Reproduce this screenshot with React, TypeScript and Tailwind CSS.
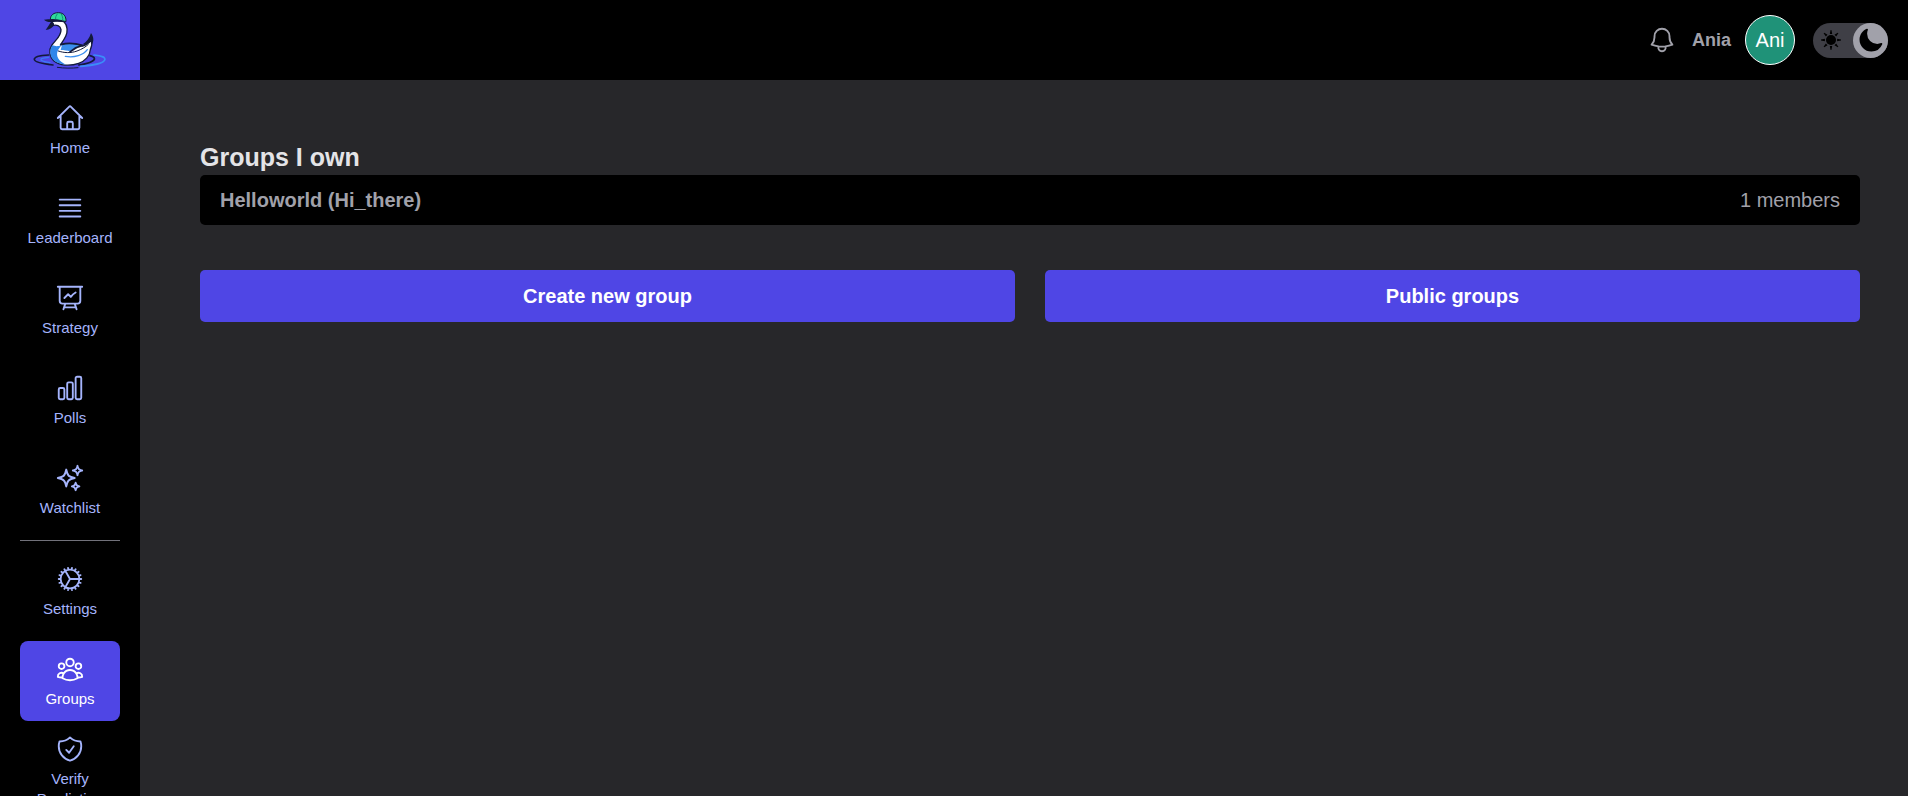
import React, { useState } from "react";
import {
  HiBars4,
  HiMoon,
  HiOutlineBell,
  HiOutlineChartBar,
  HiOutlineCog,
  HiOutlineHome,
  HiOutlinePresentationChartLine,
  HiOutlineShieldCheck,
  HiOutlineSparkles,
  HiOutlineUserGroup
} from "react-icons/hi2";

const mainLinks = [
  { label: "Home", icon: HiOutlineHome },
  { label: "Leaderboard", icon: HiBars4 },
  { label: "Strategy", icon: HiOutlinePresentationChartLine },
  { label: "Polls", icon: HiOutlineChartBar },
  { label: "Watchlist", icon: HiOutlineSparkles }
];

const accountLinks = [
  { label: "Settings", icon: HiOutlineCog },
  { label: "Groups", icon: HiOutlineUserGroup, active: true },
  { label: "Verify Prediction", icon: HiOutlineShieldCheck }
];

const groups = [{ name: "Helloworld", handle: "Hi_there", members: 1 }];

const rays = [0, 45, 90, 135, 180, 225, 270, 315];

function SwanLogo() {
  return (
    <svg viewBox="0 0 240 210" className="w-20" aria-hidden="true">
      {/* Water rings */}
      <path d="M56 150C30 151 13 156 13 163c0 8 28 14 56 17" fill="none" stroke="#131a3c" strokeWidth="5" strokeLinecap="round" />
      <path d="M56 157c-18 1-26 5-22 9 5 4 16 6 26 7" fill="none" stroke="#3b7cf5" strokeWidth="4" strokeLinecap="round" />
      <path d="M180 152c16 4 18 12 4 18-10 5-24 8-38 10" fill="none" stroke="#131a3c" strokeWidth="5" strokeLinecap="round" />
      <path d="M192 150c24 2 36 8 32 15-4 10-38 17-72 19" fill="none" stroke="#3b8cf8" strokeWidth="5" strokeLinecap="round" />
      <path d="M82 187c20 3 44 3 62 1" fill="none" stroke="#131a3c" strokeWidth="3" strokeLinecap="round" />
      {/* Tail tip */}
      <path d="M183 84C178 100 170 110 158 118L182 124C192 112 193 98 183 84Z" fill="#131a3c" />
      {/* Body and neck */}
      <path
        d="M66 50C76 46 92 46 102 50C114 62 113 82 107 94C103 103 97 111 92 119C112 115 138 117 158 123C168 120 177 114 184 105C187 116 185 126 181 134C180 152 166 168 146 175C120 184 88 182 72 168C57 154 56 134 66 120C78 104 94 92 93 74C91 62 80 58 66 62Z"
        fill="#ffffff"
        stroke="#131a3c"
        strokeWidth="4"
        strokeLinejoin="round"
      />
      <path d="M67 121c-8 12-9 29 1 42 9 10 22 15 40 16-22-10-31-26-25-41 3-8 9-12 11-18-10 5-18 4-27 1Z" fill="#2f86ea" />
      <path d="M96 120c16-4 38-4 56 2-15 4-24 11-32 17-8-2-18-4-28-4Z" fill="#3b8fee" />
      {/* Wing */}
      <path d="M92 119c20-6 44-4 66 2-20 4-28 12-38 20" fill="none" stroke="#131a3c" strokeWidth="5" strokeLinecap="round" />
      <path d="M85 138c16 6 38 7 56 0 14-5 26-12 34-20" fill="none" stroke="#131a3c" strokeWidth="3" strokeLinecap="round" />
      <path d="M172 134c-12 16-38 25-66 20" fill="none" stroke="#3b8fee" strokeWidth="4" strokeLinecap="round" />
      {/* Beak */}
      <path d="M64 49 57 60 47 75c12-2 19-7 24-13 3-5 1-9-7-13Z" fill="#131a3c" />
      {/* Cap */}
      <path d="M61 44c0-15 11-21 24-21 16 0 24 11 23 27-12-4-29-6-47-6Z" fill="#2fdb9b" stroke="#131a3c" strokeWidth="3" />
      <path d="M83 26c-5 5-7 11-6 18M93 26c4 6 6 12 5 20" fill="none" stroke="#128f78" strokeWidth="3" />
      <path d="M42 44c8-1 16-1 24-1 14 0 29 3 41 9-14-2-28-3-41-1-9 1-19-1-24-7Z" fill="#131a3c" />
    </svg>
  );
}

function SunIcon() {
  return (
    <svg viewBox="0 0 20 20" className="h-5 w-5" fill="#000000" aria-hidden="true">
      <circle cx="10" cy="10" r="5" />
      {rays.map((angle) => (
        <path key={angle} d="M8.8 3.9 9.6 0h.8l.8 3.9Z" transform={`rotate(${angle} 10 10)`} />
      ))}
    </svg>
  );
}

function NavLink({ label, icon: Icon, active = false }: { label: string; icon: React.ElementType; active?: boolean }) {
  return (
    <a
      href="#"
      aria-current={active ? "page" : undefined}
      className={
        active
          ? "flex h-20 w-[100px] shrink-0 flex-col items-center justify-center gap-[5px] rounded-lg bg-[#4f46e5] text-center text-[15px] leading-5 text-white"
          : "flex h-20 w-[100px] shrink-0 flex-col items-center justify-center gap-[5px] rounded-lg text-center text-[15px] leading-5 text-[#a5b4fc]"
      }
    >
      <Icon className="h-[30px] w-[30px] shrink-0" />
      <span>{label}</span>
    </a>
  );
}

export default function App() {
  const [dark, setDark] = useState(true);

  return (
    <div className="flex h-screen overflow-hidden bg-[#27272a] font-['Liberation_Sans',Arial,sans-serif]">
      {/* Sidebar */}
      <aside className="flex w-[140px] shrink-0 flex-col bg-black">
        <a href="#" aria-label="Home page" className="flex h-20 shrink-0 items-center justify-center bg-[#4f46e5]">
          <SwanLogo />
        </a>
        <nav className="flex min-h-0 flex-1 flex-col items-center gap-2.5 overflow-y-auto pt-2.5 [scrollbar-width:none]">
          {mainLinks.map((link) => (
            <NavLink key={link.label} {...link} />
          ))}
          <hr className="w-[100px] shrink-0 border-t border-[#71717a]" />
          {accountLinks.map((link) => (
            <NavLink key={link.label} {...link} />
          ))}
        </nav>
      </aside>

      <div className="flex min-w-0 flex-1 flex-col">
        {/* Top bar */}
        <header className="flex h-20 shrink-0 items-center justify-end bg-black pr-5 text-[#a1a1aa]">
          <button type="button" aria-label="Notifications" className="mr-[15px]">
            <HiOutlineBell className="h-[30px] w-[30px]" />
          </button>
          <span className="mr-3.5 text-lg font-bold">Ania</span>
          <button
            type="button"
            className="mr-[18px] flex h-[50px] w-[50px] items-center justify-center rounded-full border border-white bg-[#1f9278] text-xl text-white"
          >
            Ani
          </button>
          <label className="flex h-[35px] w-[75px] cursor-pointer items-center justify-between rounded-full bg-[#3f3f46]">
            <input
              type="checkbox"
              aria-label="Dark mode"
              className="sr-only"
              checked={dark}
              onChange={(e) => setDark(e.target.checked)}
            />
            <span className={dark ? "flex h-[35px] w-[35px] items-center justify-center rounded-full" : "flex h-[35px] w-[35px] items-center justify-center rounded-full bg-[#a1a1aa]"}>
              <SunIcon />
            </span>
            <span className={dark ? "flex h-[35px] w-[35px] items-center justify-center rounded-full bg-[#a1a1aa]" : "flex h-[35px] w-[35px] items-center justify-center rounded-full"}>
              <HiMoon className="h-[27px] w-[27px] text-black" />
            </span>
          </label>
        </header>

        <main className="flex-1 overflow-y-auto pt-[60px] pr-12 pl-[60px]">
          <h1 className="text-[25px] leading-[35px] font-bold text-[#e4e4e7]">Groups I own</h1>
          <ul>
            {groups.map((group) => (
              <li key={group.handle}>
                <a href="#" className="flex h-[50px] items-center justify-between rounded-[5px] bg-black px-5 text-xl text-[#a1a1aa]">
                  <span className="font-bold">
                    {group.name} ({group.handle})
                  </span>
                  <span>{group.members} members</span>
                </a>
              </li>
            ))}
          </ul>
          <div className="mt-[45px] grid grid-cols-2 gap-[30px]">
            <button type="button" className="h-[52px] rounded-[5px] bg-[#4f46e5] text-xl font-bold text-white">
              Create new group
            </button>
            <button type="button" className="h-[52px] rounded-[5px] bg-[#4f46e5] text-xl font-bold text-white">
              Public groups
            </button>
          </div>
        </main>
      </div>
    </div>
  );
}
